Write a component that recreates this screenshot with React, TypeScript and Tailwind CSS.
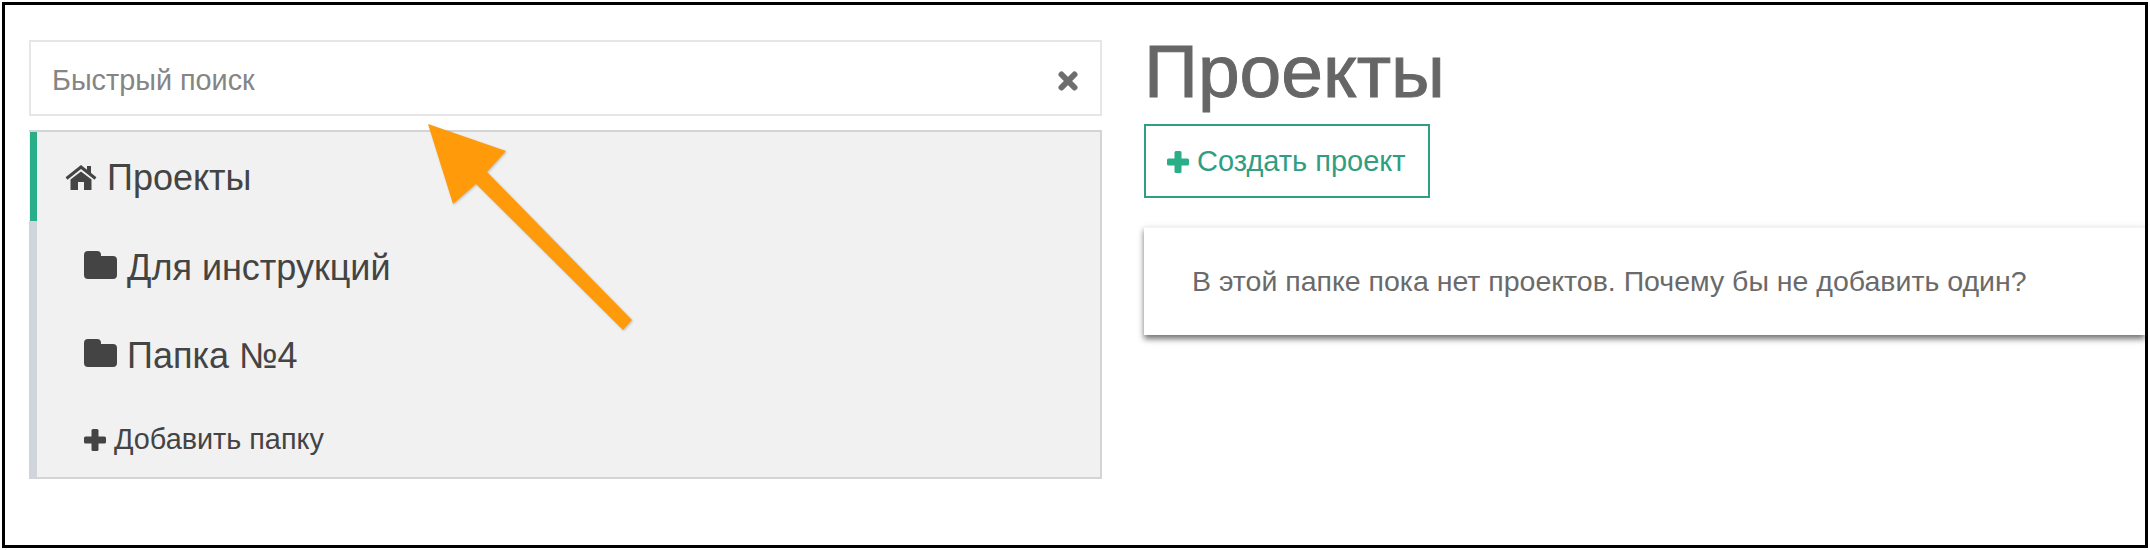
const font = "font-['Liberation_Sans',Arial,sans-serif]";

const PlusIcon = ({ className }: { className: string }) => (
  <svg viewBox="0 0 22 22" className={className} fill="currentColor">
    <rect x="7.5" y="0" width="7" height="22" rx="1.5" />
    <rect x="0" y="7.5" width="22" height="7" rx="1.5" />
  </svg>
);

const FolderIcon = () => (
  <svg viewBox="0 0 33 28" className="w-[33px] h-[28px] mr-[10px] mt-[-6px] shrink-0" fill="currentColor">
    <path d="M4 0h9a4 4 0 0 1 4 4v1h12a4 4 0 0 1 4 4v15a4 4 0 0 1-4 4H4a4 4 0 0 1-4-4V4a4 4 0 0 1 4-4z" />
  </svg>
);

const HomeIcon = () => (
  <svg viewBox="0 0 32 25" className="w-[32px] h-[25px] mr-[10px] mt-[-2px] shrink-0" fill="currentColor">
    <rect x="22" y="1" width="4" height="7" />
    <polyline points="1.5,13.5 16,2 30.5,13.5" fill="none" stroke="currentColor" strokeWidth="3" />
    <path d="M5.5 14.5 16 6.5l10.5 8V25H19v-8h-6v8H5.5z" />
  </svg>
);

const FolderRow = ({ name }: { name: string }) => (
  <div className="h-[88px] flex items-center pl-[47px] pt-[5px] text-[36px] text-[#444]">
    <FolderIcon />
    <span>{name}</span>
  </div>
);

export default function App() {
  return (
    <div className={`${font} h-[550px] w-[2150px] bg-white pl-[2px] pt-[2px]`}>
      <div className="relative h-[546px] w-[2146px] border-[3px] border-black overflow-hidden flex gap-[42px] pl-[24px] pt-[35px]">
        <div className="w-[1073px] shrink-0">
          <div className="h-[76px] border-2 border-[#e6e6e6] bg-white flex items-center justify-between pl-[21px] pr-[22px] pt-[5px]">
            <span className="text-[28.8px] text-[#858585]">Быстрый поиск</span>
            <svg viewBox="0 0 20 20" className="w-[20px] h-[20px] text-[#6e6e6e]" fill="none" stroke="currentColor" strokeWidth="6" strokeLinecap="round">
              <line x1="3.5" y1="3.5" x2="16.5" y2="16.5" />
              <line x1="16.5" y1="3.5" x2="3.5" y2="16.5" />
            </svg>
          </div>
          <div className="mt-[14px] border-t-2 border-r-2 border-b-2 border-[#d2d4d6] bg-[#f1f1f1] h-[349px] flex flex-col">
            <div className="h-[89px] ml-[1px] border-l-[7px] border-[#2aae87] flex items-center pl-[28px] pt-[3px] text-[36px] text-[#444]">
              <HomeIcon />
              <span>Проекты</span>
            </div>
            <div className="flex-1 border-l-[8px] border-[#d0d5dc]">
              <FolderRow name="Для инструкций" />
              <FolderRow name="Папка №4" />
              <div className="h-[80px] flex items-center pl-[47px] pt-[5px] text-[28.8px] text-[#444]">
                <PlusIcon className="w-[22px] h-[22px] mr-[8px] shrink-0" />
                <span>Добавить папку</span>
              </div>
            </div>
          </div>
        </div>
        <div className="flex-1 min-w-0">
          <h1 className="text-[75px] leading-[72px] text-[#666] font-normal [-webkit-text-stroke:1px_#666] mt-[-5px]">Проекты</h1>
          <button className="mt-[17px] h-[74px] w-[286px] border-2 border-[#2f9e82] flex items-center pl-[21px] pt-[2px] text-[#2f9e82] text-[29px]">
            <PlusIcon className="w-[22px] h-[22px] mr-[8px] text-[#2aae87] shrink-0" />
            <span>Создать проект</span>
          </button>
          <div className="mt-[28px] h-[109px] bg-white border-t-2 border-[#f3f3f3] shadow-[0_4px_6px_rgba(0,0,0,0.55)] flex items-center pl-[48px] text-[28.5px] text-[#6a6a6a]">
            В этой папке пока нет проектов. Почему бы не добавить один?
          </div>
        </div>
        <svg className="absolute left-[-5px] top-[-5px] pointer-events-none drop-shadow-[1px_1px_1px_rgba(0,0,0,0.2)]" width="2150" height="550">
          <polygon points="428,124 506,151 487,172 632,320 623,330 476,184 453,204" fill="#ff9a0a" />
        </svg>
      </div>
    </div>
  );
}
